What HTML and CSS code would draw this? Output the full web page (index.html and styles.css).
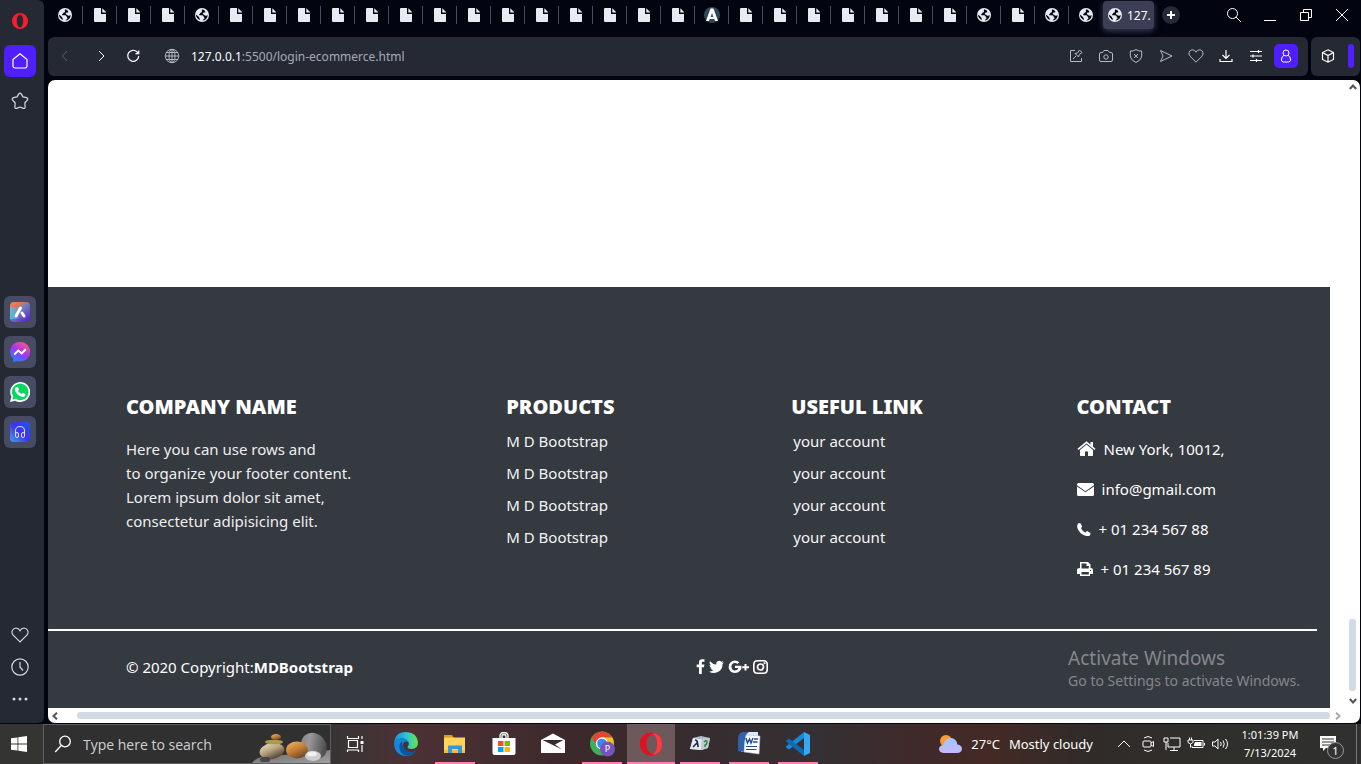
FILE: index.html
```html
<!DOCTYPE html>
<html lang="en">
<head>
<meta charset="utf-8">
<title>127.0.0.1:5500/login-ecommerce.html</title>
<link rel="stylesheet" href="styles.css">
</head>
<body>
<svg class="defs" aria-hidden="true">
  <symbol id="doc" viewBox="0 0 16 16"><path fill="#e8ecf2" d="M3 1h6v6h5v7.200q0 .8-.8.8H3.200Q2 15 2 14V2q0-1 1-1zM10.300 1.300 14 5v.6h-3.700z"/></symbol>
  <symbol id="globe" viewBox="0 0 16 16"><circle cx="8" cy="8" r="7" fill="#e8ecf2"/><path fill="#02040f" d="M8.500 2.200q-1.500 1.300-.4 2.300-.1 1-1.600 1.200-.3 1.200-1.500 1.500l.5 1.100 2.800-.1q1.600.7 1.500 2 1 .3.700 1.300L8.300 13.500Q13.500 13.200 13.700 8l-1.500.8Q10.500 9 10.200 7.700L8.800 7.200l.3-1.400 2.400-.6-.8-1.700zM1.800 7.600l2.400 1.700 1.100 1.500.9 2.200Q2.500 12 1.800 7.600z"/></symbol>
  <symbol id="heart" viewBox="0 0 16 16"><path fill="none" stroke="currentColor" stroke-width="1" d="M8 14.200 1.900 8.100Q.3 6 1.200 4 2.200 1.800 4.500 1.800 6.900 1.900 8 4.200 9.100 1.900 11.500 1.800q2.300 0 3.300 2.200.9 2-.7 4.100z"/></symbol>
</svg>

<div class="browser">
  <nav class="sidebar" aria-label="Browser sidebar">
    <div class="side-top">
      <button class="side-btn menu" aria-label="Opera menu"><svg viewBox="0 0 16 16" width="16" height="16"><path fill="#fa1e2d" fill-rule="evenodd" d="M8 0a8 8 0 1 0 0 16A8 8 0 1 0 8 0zM8 1.600c2 0 3.200 3 3.200 6.400S10 14.400 8 14.400 4.800 11.400 4.800 8 6 1.600 8 1.600z"/></svg></button>
      <button class="side-btn home" aria-label="Home"><svg viewBox="0 0 16 16" width="16" height="16"><path fill="none" stroke="#fff" stroke-width="1.200" d="M1 6.500 8 .7l7 5.800v6.300q0 2.200-2.200 2.200H3.200Q1 15 1 12.800z"/></svg></button>
      <button class="side-btn" aria-label="Favourites"><svg viewBox="0 0 18 18" width="18" height="18"><path fill="none" stroke="#d5d9e2" stroke-width="1.200" stroke-linejoin="round" d="M7.700 1.900Q9 .6 10.300 1.900l1.600 3 3.800.8q1.500.9.800 2.200l-2.700 3.100.4 4q-.2 1.800-1.900 1.400L9 15l-3.300 1.400Q4 16.800 3.800 15l.4-4L1.500 7.900q-.7-1.300.8-2.200l3.800-.8z"/></svg></button>
    </div>
    <div class="side-apps">
      <button class="side-btn app" aria-label="Aria"><svg viewBox="0 0 20 20" width="20" height="20"><defs><linearGradient id="aria" x1="0" y1="0" x2=".8" y2="1"><stop offset="0" stop-color="#e78f62"/><stop offset=".25" stop-color="#e47747"/><stop offset=".5" stop-color="#6f80bd"/><stop offset="1" stop-color="#5a27cf"/></linearGradient><linearGradient id="ariab"><stop offset="0" stop-color="#4cc4e4"/><stop offset=".5" stop-color="#4cc4e4" stop-opacity="0"/></linearGradient></defs><rect width="20" height="20" rx="4" fill="url(#aria)"/><rect y="5" width="20" height="12" fill="url(#ariab)"/><path stroke="#fff" stroke-width="3" stroke-linecap="round" d="M6 14 10.500 6M12 11l2 3"/></svg></button>
      <button class="side-btn app" aria-label="Messenger"><svg viewBox="0 0 20 20" width="20" height="20"><defs><linearGradient id="msg" x1=".2" y1="1" x2=".8" y2="0"><stop offset="0" stop-color="#168cff"/><stop offset=".5" stop-color="#a034fa"/><stop offset="1" stop-color="#ff5b75"/></linearGradient></defs><path fill="url(#msg)" d="M10 0a10 9.700 0 1 1-3 18.900L3.500 20 3.300 16.700A9.600 9.600 0 0 1 10 0z"/><path fill="none" stroke="#fff" stroke-width="2" d="m4.300 12.500 3.900-4 3.600 2.800 4-4"/></svg></button>
      <button class="side-btn app" aria-label="WhatsApp"><svg viewBox="0 0 20 20" width="20" height="20"><path fill="#fff" d="M0 20 1.400 14.800A10 10 0 1 1 5.200 18.700z"/><path fill="#08d860" d="m2.400 17.600.9-3.100A8.300 8.300 0 1 1 5.600 16.800z"/><path fill="#fff" d="M6.500 5h1.300l1.200 2.600-1 1.400q1.200 2.200 3.600 3l1.200-1.300 2.600 1.300q.2 2.800-2.600 3-3-.2-5.700-3Q4.600 9 5 6.500q.5-1.300 1.500-1.500z"/></svg></button>
      <button class="side-btn app" aria-label="Player"><svg viewBox="0 0 20 20" width="20" height="20"><defs><linearGradient id="ply" x1="0" y1="1" x2="1" y2="0"><stop offset="0" stop-color="#41a6f2"/><stop offset=".5" stop-color="#4031ee"/><stop offset="1" stop-color="#175ee0"/></linearGradient></defs><rect width="20" height="20" rx="4" fill="url(#ply)"/><path fill="none" stroke="#dfe2ff" d="M5.500 13V9q0-4.500 4.500-4.500T14.500 9v4"/><rect x="5.500" y="10.500" width="3" height="5" rx="1.500" fill="none" stroke="#dfe2ff"/><rect x="11.500" y="10.500" width="3" height="5" rx="1.500" fill="none" stroke="#dfe2ff"/></svg></button>
    </div>
    <div class="side-bottom">
      <button class="side-btn" aria-label="Pinboards"><svg width="18" height="18"><use href="#heart"/></svg></button>
      <button class="side-btn" aria-label="History"><svg viewBox="0 0 18 18" width="18" height="18" fill="none" stroke="#d5d9e2" stroke-width="1.200"><circle cx="9" cy="9" r="8.200"/><path d="M9 4v5l3 3.500"/></svg></button>
      <button class="side-btn" aria-label="More"><svg viewBox="0 0 18 18" width="18" height="18" fill="#d5d9e2"><circle cx="3" cy="9" r="1.500"/><circle cx="9" cy="9" r="1.500"/><circle cx="15" cy="9" r="1.500"/></svg></button>
    </div>
  </nav>

  <div class="window">
    <div class="tabstrip">
      <div class="tabs">
        <button class="tab" aria-label="Tab"><svg><use href="#globe"/></svg></button>
        <button class="tab" aria-label="Tab"><svg><use href="#doc"/></svg></button>
        <button class="tab" aria-label="Tab"><svg><use href="#doc"/></svg></button>
        <button class="tab" aria-label="Tab"><svg><use href="#doc"/></svg></button>
        <button class="tab" aria-label="Tab"><svg><use href="#globe"/></svg></button>
        <button class="tab" aria-label="Tab"><svg><use href="#doc"/></svg></button>
        <button class="tab" aria-label="Tab"><svg><use href="#doc"/></svg></button>
        <button class="tab" aria-label="Tab"><svg><use href="#doc"/></svg></button>
        <button class="tab" aria-label="Tab"><svg><use href="#doc"/></svg></button>
        <button class="tab" aria-label="Tab"><svg><use href="#doc"/></svg></button>
        <button class="tab" aria-label="Tab"><svg><use href="#doc"/></svg></button>
        <button class="tab" aria-label="Tab"><svg><use href="#doc"/></svg></button>
        <button class="tab" aria-label="Tab"><svg><use href="#doc"/></svg></button>
        <button class="tab" aria-label="Tab"><svg><use href="#doc"/></svg></button>
        <button class="tab" aria-label="Tab"><svg><use href="#doc"/></svg></button>
        <button class="tab" aria-label="Tab"><svg><use href="#doc"/></svg></button>
        <button class="tab" aria-label="Tab"><svg><use href="#doc"/></svg></button>
        <button class="tab" aria-label="Tab"><svg><use href="#doc"/></svg></button>
        <button class="tab" aria-label="Tab"><svg><use href="#doc"/></svg></button>
        <button class="tab" aria-label="Tab"><svg viewBox="0 0 16 16"><circle cx="8" cy="8" r="8" fill="#30475a"/><path fill="#fff" fill-rule="evenodd" d="M6.500 1.500h3L14 14h-2.800l-1-2H5.800l-1 2H2zM8 6l-1.300 4h2.600z"/></svg></button>
        <button class="tab" aria-label="Tab"><svg><use href="#doc"/></svg></button>
        <button class="tab" aria-label="Tab"><svg><use href="#doc"/></svg></button>
        <button class="tab" aria-label="Tab"><svg><use href="#doc"/></svg></button>
        <button class="tab" aria-label="Tab"><svg><use href="#doc"/></svg></button>
        <button class="tab" aria-label="Tab"><svg><use href="#doc"/></svg></button>
        <button class="tab" aria-label="Tab"><svg><use href="#doc"/></svg></button>
        <button class="tab" aria-label="Tab"><svg><use href="#doc"/></svg></button>
        <button class="tab" aria-label="Tab"><svg><use href="#globe"/></svg></button>
        <button class="tab" aria-label="Tab"><svg><use href="#doc"/></svg></button>
        <button class="tab" aria-label="Tab"><svg><use href="#globe"/></svg></button>
        <button class="tab last" aria-label="Tab"><svg><use href="#globe"/></svg></button>
        <button class="tab active"><svg><use href="#globe"/></svg><span>127.</span></button>
        <button class="new-tab" aria-label="New tab"><svg viewBox="0 0 18 18" width="18" height="18"><circle cx="9" cy="9" r="9" fill="#262a36"/><path stroke="#fff" stroke-width="2" d="M9 5v8M5 9h8"/></svg></button>
      </div>
      <div class="window-controls">
        <button aria-label="Search tabs"><svg viewBox="0 0 16 16"><circle cx="6.500" cy="6.500" r="5"/><path d="m10 10 5 5"/></svg></button>
        <button aria-label="Minimise"><svg viewBox="0 0 16 16"><path d="M2 13.500h12"/></svg></button>
        <button aria-label="Restore"><svg viewBox="0 0 16 16"><path d="M2.500 5.500h8v8h-8zM5.500 5.500v-3h8v8h-3"/></svg></button>
        <button aria-label="Close"><svg viewBox="0 0 16 16"><path d="m2 2 12 12M14 2 2 14"/></svg></button>
      </div>
    </div>

    <div class="toolbar">
      <div class="address-bar">
        <div class="nav-buttons">
          <button class="dim" aria-label="Back"><svg viewBox="0 0 16 16"><path d="M9 3 4.500 8 9 13"/></svg></button>
          <button aria-label="Forward"><svg viewBox="0 0 16 16"><path d="m7 3 5 5-5 5"/></svg></button>
          <button aria-label="Reload"><svg viewBox="0 0 16 16"><path stroke-width="1.200" d="M12.700 7.900A5.500 5.500 0 1 1 11.200 4l1.300 1.400M12.800 2.500v3.200H9.500"/></svg></button>
        </div>
        <svg class="site-icon" viewBox="0 0 16 16"><circle cx="8" cy="8" r="6.700"/><ellipse cx="8" cy="8" rx="3" ry="6.700"/><path d="M8 1v14M1.500 8h13M2.500 4.500h11M2.500 11.500h11"/></svg>
        <a class="url" href="#"><b>127.0.0.1</b>:5500/login-ecommerce.html</a>
        <div class="actions">
          <button class="soft" aria-label="Edit page"><svg viewBox="0 0 16 16"><path d="M7 2.500H2.500v11h11V10M5 11l3-3M7 5.500 10.500 9l.7-2.300 2.800-2.200L11.500 2 9.500 5z"/></svg></button>
          <button class="soft" aria-label="Snapshot"><svg viewBox="0 0 16 16"><path d="M4.500 4.500 6 2.500h4l1.500 2H13q1.500 0 1.500 1.500v6q0 1.500-1.500 1.500H3q-1.500 0-1.500-1.500V6Q1.500 4.500 3 4.500z"/><circle cx="8" cy="9" r="2.200"/></svg></button>
          <button class="soft" aria-label="Ad blocker"><svg viewBox="0 0 16 16"><path d="M8 1.500q2.800 2 5.700 1.500v5Q13.700 12 8 14.500 2.300 12 2.300 8V3Q5.200 3.500 8 1.500zM6 6l4 4M10 6l-4 4"/></svg></button>
          <button class="soft" aria-label="Send"><svg viewBox="0 0 16 16"><path d="m2.500 2.500 11.500 5.500-11.500 5.500L5 8z"/></svg></button>
          <button class="soft" aria-label="Add to pinboard"><svg><use href="#heart"/></svg></button>
          <button aria-label="Downloads"><svg viewBox="0 0 16 16"><path stroke-width="1.200" d="M8 2v8M4.500 7 8 10.500 11.500 7M2 11v2.500h12V11"/></svg></button>
          <button aria-label="Easy setup"><svg viewBox="0 0 16 16"><path stroke-width="1.200" d="M2 3.500h12M2 8h12M2 12.500h12M10.500 2v3M5 6.500v3M8.500 11v3"/></svg></button>
          <button class="profile" aria-label="Profile"><svg viewBox="0 0 16 16"><circle cx="8" cy="5" r="3"/><path d="M6 7.300Q3.500 9 3.500 11v1q0 2 2 2h5q2 0 2-2v-1q0-2-2.500-3.700"/></svg></button>
        </div>
      </div>
      <div class="extensions">
        <button aria-label="Extensions"><svg viewBox="0 0 16 16"><path stroke-width="1.200" d="m8 1.800 5.500 2.700v7L8 14.200l-5.500-2.700v-7zM2.500 4.500 8 7.500l5.500-3M8 7.500v6.700"/></svg></button>
        <span class="panel-handle"></span>
      </div>
    </div>

    <main class="page">
      <div class="page-view">
        <footer class="footer">
          <div class="columns">
            <section class="company">
              <h2>COMPANY NAME</h2>
              <p>Here you can use rows and<br>to organize your footer content.<br>Lorem ipsum dolor sit amet,<br>consectetur adipisicing elit.</p>
            </section>
            <section>
              <h2>PRODUCTS</h2>
              <ul class="links">
                <li><a href="#">M D Bootstrap</a></li>
                <li><a href="#">M D Bootstrap</a></li>
                <li><a href="#">M D Bootstrap</a></li>
                <li><a href="#">M D Bootstrap</a></li>
              </ul>
            </section>
            <section>
              <h2>USEFUL LINK</h2>
              <ul class="links inset">
                <li><a href="#">your account</a></li>
                <li><a href="#">your account</a></li>
                <li><a href="#">your account</a></li>
                <li><a href="#">your account</a></li>
              </ul>
            </section>
            <section>
              <h2>CONTACT</h2>
              <ul class="contact">
                <li><svg viewBox="0 0 19 16" width="19" height="16"><path d="M9.500 3.500 16 9v5.300q0 .7-.7.700H11v-4.500H8V15H3.700Q3 15 3 14.300V9z"/><path d="m1 8.300 8.500-7 8.500 7" fill="none" stroke="#fff" stroke-width="1.600"/><path d="M13.500 1H16v5l-2.500-2z"/></svg>New York, 10012,</li>
                <li><svg viewBox="0 0 17 16" width="17" height="16"><path d="M1.500 2h14q1.500 0 1.500 1.500v.7l-8.500 6L0 4.200v-.7Q0 2 1.500 2zM0 5.500l8.500 5.800L17 5.500v8q0 1.500-1.500 1.500h-14Q0 15 0 13.500z"/></svg>info@gmail.com</li>
                <li><svg viewBox="0 0 14 16" width="14" height="16"><path d="M1 2.500 3.200 2 5.300 5.500 4 7.300q1.500 3 4.200 4.200L10 10l3.500 2-.5 2.500q-2 1-4.500.3Q2 12.500.2 6.500 0 4 1 2.500z"/></svg>+ 01 234 567 88</li>
                <li><svg viewBox="0 0 16 16" width="16" height="16"><path fill-rule="evenodd" d="M3 1h8l2.500 2.500V7q2.500 0 2.500 2v4h-3v2H3v-2H0V9q0-2 3-2zM4.500 2.500v5h7.300V5H9.500V2.500zM4.500 11v2.500h7.300V11zM13 9v1h1V9z"/></svg>+ 01 234 567 89</li>
              </ul>
            </section>
          </div>
          <hr>
          <div class="legal">
            <p>© 2020 Copyright:<a href="#">MDBootstrap</a></p>
            <div class="social">
              <a href="#" aria-label="Facebook"><svg viewBox="0 0 9 16" width="9" height="16"><path d="M8.500.2v2.600H7q-1.200 0-1.200 1v1.700h2.600L8 8.200H5.800V15H3V8.200H.7V5.500H3V3.400Q3 .2 6.200.2z"/></svg></a>
              <a href="#" aria-label="Twitter"><svg viewBox="0 0 15 16" width="15" height="16"><path d="M15 3.500 13.500 5q.2 4.500-3 7Q5.500 15.500 0 12.700q2.500 0 4.300-1.400-2.200-.3-2.800-2h1.300Q.5 8.300.5 6l1.400.4Q-.2 4.500 1 2.300q2.400 2.900 6.300 3.200Q7 3.200 8.500 2.300q2.100-1.200 3.800.4l1.900-.7-1.200 1.700z"/></svg></a>
              <a href="#" aria-label="Google Plus"><svg viewBox="0 0 21 16" width="21" height="16"><path d="M7 6.700h6.500q.4 3-1.400 5-2 2.300-5.200 2.300-6-.4-6.300-6Q1 2 7 1.500q2.600 0 4.300 1.700L9.500 5Q8.500 4.100 7 4.100 3.500 4.400 3.400 7.800 3.600 11.300 7 11.500q2.900-.1 3.400-2.500H7zM16.500 5h2v2.200H21v2h-2.500v2.300h-2V9.200h-2.300v-2h2.300z"/></svg></a>
              <a href="#" aria-label="Instagram"><svg viewBox="0 0 15 16" width="15" height="16"><path fill-rule="evenodd" d="M4.500 1h6Q15 1 15 5.500v5q0 4.500-4.500 4.500h-6Q0 15 0 10.500v-5Q0 1 4.500 1zM4.600 2.600Q1.600 2.600 1.600 5.600v4.800q0 3 3 3h5.800q3 0 3-3V5.600q0-3-3-3z"/><circle cx="7.500" cy="8" r="3" fill="none" stroke="#fff" stroke-width="1.700"/><circle cx="11.500" cy="4.300" r="1"/></svg></a>
            </div>
          </div>
        </footer>
      </div>
      <div class="vscroll" aria-hidden="true">
        <svg viewBox="0 0 8 8" width="8" height="8"><path d="M.8 6 4 2.500 7.200 6"/></svg>
        <span class="thumb"></span>
        <svg viewBox="0 0 8 8" width="8" height="8"><path d="M.8 2 4 5.500 7.200 2"/></svg>
      </div>
      <div class="hscroll" aria-hidden="true">
        <svg viewBox="0 0 8 8" width="8" height="8"><path d="M6 .8 2.500 4 6 7.200"/></svg>
        <span class="thumb"></span>
        <svg class="faded" viewBox="0 0 8 8" width="8" height="8"><path d="M2 .8 5.500 4 2 7.200"/></svg>
      </div>
      <div class="activate"><strong>Activate Windows</strong><span>Go to Settings to activate Windows.</span></div>
    </main>
  </div>
</div>

<div class="taskbar">
  <button class="start" aria-label="Start"><svg viewBox="0 0 16 16" width="16" height="16"><path fill="#fff" d="M0 2.300 6.500 1.400v6.100H0zM7.300 1.200 16 0v7.500H7.300zM0 8.400h6.500v6.200L0 13.700zM7.300 8.400H16V16l-8.700-1.200z"/></svg></button>
  <div class="search">
    <svg viewBox="0 0 18 18" width="18" height="18"><circle cx="11" cy="6.500" r="5.300" fill="none" stroke="#fff" stroke-width="1.300"/><path stroke="#fff" stroke-width="1.300" d="m7.200 10.500-6 6.500"/></svg>
    <input type="text" placeholder="Type here to search" aria-label="Type here to search">
    <svg class="stones" viewBox="0 0 80 38" width="80" height="38">
      <defs>
        <linearGradient id="sand" x2="0.400" y2="1"><stop offset="0" stop-color="#e9dfbd"/><stop offset=".5" stop-color="#bca984"/><stop offset="1" stop-color="#5c4e3b"/></linearGradient>
        <linearGradient id="amber" x2="0.600" y2="1"><stop offset="0" stop-color="#f2b85f"/><stop offset=".6" stop-color="#bd7833"/><stop offset="1" stop-color="#6b4929"/></linearGradient>
        <linearGradient id="slate" x2="0.700" y2="1"><stop offset="0" stop-color="#7c7d7d"/><stop offset=".4" stop-color="#999"/><stop offset="1" stop-color="#444"/></linearGradient>
        <linearGradient id="ground" y2="1"><stop offset="0" stop-color="#666"/><stop offset="1" stop-color="#a0a0a0"/></linearGradient>
      </defs>
      <path fill="url(#ground)" d="M2 38Q7 31 19 31L60 28l20-3v13z"/>
      <ellipse cx="64" cy="21" rx="12" ry="14" fill="url(#slate)" transform="rotate(-40 64 21)"/>
      <ellipse cx="22" cy="26" rx="12.500" ry="8" fill="url(#sand)" transform="rotate(-10 22 26)"/>
      <ellipse cx="24" cy="17" rx="9" ry="2.300" fill="#aa9c4e"/>
      <ellipse cx="26" cy="12" rx="5" ry="3" fill="url(#amber)"/>
      <ellipse cx="47" cy="25" rx="11" ry="8.500" fill="url(#amber)"/>
      <ellipse cx="63" cy="31" rx="8" ry="5" fill="#cdcdcd"/><ellipse cx="62" cy="29" rx="5" ry="2.500" fill="#efefef"/>
      <rect x="10" y="32" width="10" height="5" rx="2.500" fill="#464646"/>
    </svg>
  </div>
  <div class="pinned">
    <button aria-label="Task view"><svg viewBox="0 0 24 24" width="24" height="24" fill="none" stroke="#fff" stroke-width="1.200"><path d="M5.500 8.500h9v7h-9zM4.500 4v2.500h11V4M4.500 20v-2h11v2M19 4v3M19 13v7"/><path fill="#fff" stroke="none" d="M17.500 9h3v3h-3z"/></svg></button>
    <button aria-label="Edge"><svg viewBox="0 0 24 24" width="24" height="24"><defs><linearGradient id="e1"><stop offset="0" stop-color="#128ed6"/><stop offset=".5" stop-color="#2bc2dd"/><stop offset="1" stop-color="#67e54a"/></linearGradient></defs><path fill="url(#e1)" d="M0 11Q1 0 12 0q11 0 12 10.500Q24 17 17.500 17q-4 0-4-2.200Q16 12 14 9.200 10.500 5 5.500 7 1.500 8 0 11z"/><path fill="#1687d8" d="M0 11Q2 5.500 8 6.300q5 .4 6.500 4Q10 8 9 12.500q-.5 7.500 7 8.300 3.500 0 5.500-1.800Q18 24 12 24 1 23.500 0 12z"/><path fill="#0b56a0" d="M8 9q-5 5-1 11 3 4.500 8 3.600 4-1 7-5-3.500 2-7 1Q8 17 8 9z"/></svg></button>
    <button class="open" aria-label="File Explorer"><svg viewBox="0 0 24 24" width="24" height="24"><path fill="#e39b0b" d="M1 3h8l2 3H1z"/><path fill="#ffd35c" d="M1 5.500h21V21H1z"/><path fill="#f8bd38" d="M1 18h21v3H1z"/><path fill="#3797dc" d="M5 13.500h14V21h-4v-4H9v4H5z"/></svg></button>
    <button aria-label="Microsoft Store"><svg viewBox="0 0 24 24" width="24" height="24"><path fill="none" stroke="#fff" stroke-width="1.300" d="M8 7V4q0-3.500 4-3.500T16 4v3M10 7V4q0-1.500 2-1.500T14 4v3"/><path fill="#fff" d="M.5 6h23v15q0 2-2 2h-19q-2 0-2-2z"/><path fill="#f25022" d="M6 9h5.500v5H6z"/><path fill="#7fba00" d="M12.500 9H18v5h-5.500z"/><path fill="#00a4ef" d="M6 15h5.500v5H6z"/><path fill="#ffb900" d="M12.500 15H18v5h-5.500z"/></svg></button>
    <button aria-label="Mail"><svg viewBox="0 0 24 24" width="24" height="24"><path fill="#fff" d="m0 8 12-6.500L24 8v13H0z"/><path fill="#3a292b" d="M1.500 8H22.500L14 12.500l7 5z"/></svg></button>
    <button class="open" aria-label="Chrome"><svg viewBox="0 0 26 26" width="26" height="26"><circle cx="13" cy="12.500" r="12" fill="#3daf57"/><path fill="#e94335" d="M2.700 6.500A12 12 0 0 1 23.400 6.500H13L8 14.500z"/><path fill="#fbc116" d="M13 6.500h10.400Q26 12 24 17l-10 7 4.500-9z"/><circle cx="13" cy="12.500" r="5.500" fill="#4285f4" stroke="#fff" stroke-width="1.300"/><circle cx="18.500" cy="18" r="7.500" fill="#7654bd"/><text x="18.500" y="21" text-anchor="middle" class="avatar">P</text></svg></button>
    <button class="open current" aria-label="Opera"><svg viewBox="0 0 24 24" width="24" height="24"><path fill="#e01222" fill-rule="evenodd" d="M12 .5a11.200 11.500 0 1 0 0 23 11.200 11.500 0 1 0 0-23zM13 2.500c3 0 5 4 5 9.500s-2 9.500-5 9.500-5.500-4-5.500-9.500 2.500-9.500 5.500-9.500z"/><path fill="#ff3b42" d="M15.500 1Q23.200 3.800 23.200 12T15.500 23L13 21.500q5 0 5-9.500T13 2.500z"/></svg></button>
    <button class="open" aria-label="Lambda cubes"><svg viewBox="0 0 24 24" width="24" height="24"><path fill="#aebdc9" d="m5 6 8-2 9 2-2 10-6 2-12-1z"/><path fill="#e3e9ef" d="m5 6 9 1.500L13 18 2 17z"/><path fill="#c2cdc9" d="m14 7.500 8-1.500-2 10-7 2z"/><path fill="none" stroke="#1e2847" stroke-width="1.600" d="M7 8q2 0 2.200 2l1 5M9 11l-4 4"/><path fill="none" stroke="#268655" stroke-width="1.500" d="M16 10q3-2.500 3 0t-2 3v2"/></svg></button>
    <button class="open" aria-label="Word"><svg viewBox="0 0 24 24" width="24" height="24"><path fill="#dce9f8" d="M6 0h15v20H4z"/><path fill="#2f62a9" d="M1 7q0-7 6-7h5Q7 2 7 20l-6-1z"/><path fill="#fff" stroke="#afc4de" stroke-width=".6" d="m9 3 14 1-1 18-15-2z"/><path fill="none" stroke="#214a98" stroke-width="1.500" d="m9 6 1.500 5L12.500 7l1.500 4L16 6M17 7h4M16 10h4.500"/><path fill="none" stroke="#214a98" stroke-width="1.200" d="M9 14.500h11M9 17.500h10.500"/></svg></button>
    <button class="open" aria-label="Visual Studio Code"><svg viewBox="0 0 24 24" width="24" height="24"><path fill="#138bd8" d="M18 0v6L3 17.500 0 15.500v-1z"/><path fill="#0c6bb1" d="m0 8.500 3-2L18 18v6L0 9.500z"/><path fill="#35a8f2" d="m18 0 6 3v18l-6 3z"/></svg></button>
  </div>
  <div class="tray">
    <button class="weather"><svg viewBox="0 0 24 20" width="24" height="20"><defs><linearGradient id="cl" x2="0" y2="1"><stop offset="0" stop-color="#9fc6ff"/><stop offset="1" stop-color="#c6b8f9"/></linearGradient></defs><circle cx="8" cy="7" r="6" fill="#f89b37"/><path fill="url(#cl)" d="M5.500 19Q1 18.500 1 15q.3-3.500 4.300-4Q7 4 13 4q5.500.5 6.400 6.500Q24 11 24 15q-.5 4-5 4z"/></svg><span>27°C</span><span>Mostly cloudy</span></button>
    <div class="tray-icons">
      <button aria-label="Show hidden icons"><svg viewBox="0 0 18 18"><path d="m3 12 6-6 6 6"/></svg></button>
      <button aria-label="Meet now"><svg viewBox="0 0 18 18"><path d="M5 3q4-3 8 0M5 15q4 3 8 0M5 6h6q1 0 1 1v4q0 1-1 1H5q-1 0-1-1V7q0-1 1-1zM12 8l2.500-1.500v5L12 10"/></svg></button>
      <button aria-label="Network"><svg viewBox="0 0 18 18"><path d="M7 3h10v9H5V8M1 3h4v4H1zM3 7v8M7 15.500h8M11 12v3.500"/></svg></button>
      <button aria-label="Battery"><svg viewBox="0 0 18 18"><path d="M7 5.500h9v7H5V11M1 5h5v2.500q-2.500 3-5 0zM2.500 2.500V5M4.500 2.500V5M17.500 8v2.500M3.500 9v3.500"/><path class="solid" d="M8 7h6.500v4H7V9.500z"/></svg></button>
      <button aria-label="Volume"><svg viewBox="0 0 18 18"><path d="M1.500 7H4l3-3v10l-3-3H1.500zM9.500 7q1.500 2 0 4M12 5.500q2.500 3.500 0 7M14.500 4q4 5 0 10"/></svg></button>
    </div>
    <div class="clock"><span>1:01:39 PM</span><span>7/13/2024</span></div>
    <button class="notices" aria-label="Notifications"><svg viewBox="0 0 18 18" width="18" height="18"><path fill="#fff" fill-rule="evenodd" d="M1 1h16v12H7l-3 3v-3H1zM3 3.500v1h12v-1zM3 6.500v1h12v-1zM3 9.500v1h8v-1z"/></svg><span class="badge">1</span></button>
  </div>
</div>
</body>
</html>
```
FILE: styles.css
```css
* { box-sizing: border-box; }
body {
  margin: 0;
  height: 100vh;
  display: flex;
  flex-direction: column;
  overflow: hidden;
  background: #02040f;
  color: #fff;
  font-family: "Noto Sans", "Open Sans", sans-serif;
}
button {
  display: flex;
  align-items: center;
  justify-content: center;
  padding: 0;
  border: 0;
  background: none;
  color: inherit;
  font: inherit;
}
svg { flex: none; display: block; }
h2, p, ul { margin: 0; padding: 0; }
ul { list-style: none; }
a { color: inherit; text-decoration: none; }
.defs { position: absolute; width: 0; height: 0; }

.browser { flex: 1; min-height: 0; display: flex; gap: 4px; padding-bottom: 1px; }

/* Sidebar */
.sidebar {
  flex: none;
  width: 44px;
  display: flex;
  flex-direction: column;
  justify-content: space-between;
  padding: 5px 0 8px 4px;
  background: #252934;
  border-radius: 0 6px 6px 0;
  color: #d5d9e2;
}
.side-top, .side-apps { display: flex; flex-direction: column; gap: 8px; }
.side-apps { padding-top: 8px; }
.side-btn { width: 32px; height: 32px; border-radius: 6px; }
.home { background: #4f1fff; }
.app { background: #484c62; }

/* Tabs */
.window { flex: 1; min-width: 0; display: flex; flex-direction: column; }
.tabstrip { height: 37px; display: flex; justify-content: space-between; }
.tabs { display: flex; padding-top: 1px; }
.tab { position: relative; width: 34px; height: 28px; }
.tab + .tab { padding-left: 2px; }
.tab svg { width: 16px; height: 16px; }
.tab::after {
  content: "";
  position: absolute;
  right: -1px;
  top: 5px;
  width: 1px;
  height: 18px;
  background: #484b62;
}
.tab.last::after, .tab.active::after { display: none; }
.tab.active {
  width: 51px;
  margin-left: 1px;
  gap: 4px;
  padding-left: 4px;
  justify-content: flex-start;
  overflow: hidden;
  border-radius: 4px;
  background: #3b3e55;
  box-shadow: 0 2px 6px #3b3e55;
  font-size: 12px;
}
.new-tab { width: 18px; height: 28px; margin-left: 8px; }
.window-controls { display: flex; gap: 4px; padding-right: 3px; }
.window-controls button { width: 32px; height: 30px; }
.window-controls svg, .nav-buttons svg, .actions svg, .extensions svg, .site-icon {
  width: 16px;
  height: 16px;
  fill: none;
  stroke: currentColor;
  stroke-width: 1;
}

/* Toolbar */
.toolbar { height: 39px; display: flex; gap: 3px; margin-bottom: 4px; padding-right: 1px; }
.address-bar {
  flex: 1;
  display: flex;
  align-items: center;
  padding: 0 10px 1px 8px;
  border-radius: 6px;
  background: #252934;
}
.nav-buttons { display: flex; gap: 14px; }
.nav-buttons button { width: 20px; height: 24px; }
.nav-buttons .dim { color: #5c606c; }
.site-icon { margin: 0 11px 0 20px; color: #b4b8c0; }
.url { flex: 1; color: #a4abb8; font-size: 12px; }
.url b { color: #fff; font-weight: 400; }
.actions { display: flex; gap: 6px; }
.actions button { width: 24px; height: 24px; border-radius: 5px; }
.actions .soft { color: #b6bac2; }
.actions .profile { background: #4f1fff; }
.extensions {
  width: 49px;
  display: flex;
  align-items: center;
  justify-content: space-between;
  padding: 0 6px 1px 9px;
  border-radius: 6px;
  background: #252934;
}
.panel-handle { width: 6px; height: 24px; border-radius: 3px; background: #4f1fff; }

/* Page viewport */
.page {
  position: relative;
  flex: 1;
  min-height: 0;
  display: grid;
  grid-template: minmax(0, 1fr) 15px / minmax(0, 1fr) 15px;
  margin-right: 1px;
  overflow: hidden;
  border-radius: 7px;
  background: #fff;
}
.page-view { display: flex; flex-direction: column; justify-content: flex-end; padding-right: 15px; }
.vscroll, .hscroll { display: flex; align-items: center; }
.vscroll { flex-direction: column; padding: 3px 0; }
.hscroll { padding: 0 3px 0 3px; gap: 4px; }
.vscroll svg, .hscroll svg { fill: none; stroke: #555; stroke-width: 2; }
.hscroll .faded { stroke: #aaa; }
.vscroll .thumb { width: 7px; height: 72px; margin: auto 0 6px; border-radius: 3px; background: #d1dbe4; }
.hscroll .thumb { flex: 1; height: 7px; margin-left: 14px; border-radius: 3px; background: #d1dbe4; }

/* Footer */
.footer { background: #353940; font-size: 15px; line-height: 24px; }
.columns { display: grid; grid-template-columns: 12fr 9fr 9fr 8fr; padding: 108px 0 48px 78px; }
.footer h2 { font-size: 20px; font-weight: 900; line-height: 24px; }
.company p { margin-top: 18px; color: #eee; }
.links { margin-top: 6px; line-height: 32px; color: #f4f4f4; }
.inset { padding-left: 2px; }
.contact { display: flex; flex-direction: column; gap: 16px; margin-top: 18px; }
.contact li { display: flex; align-items: center; gap: 8px; }
.contact svg, .social svg { fill: #fff; }
.footer hr { height: 2px; margin: 0 13px 0 0; border: 0; background: #fff; }
.legal { display: grid; grid-template-columns: 9fr 10fr; align-items: center; padding: 24px 0 29px 78px; }
.legal a { font-weight: 700; }
.social { display: flex; gap: 4px; }
.activate {
  position: absolute;
  right: 60px;
  bottom: 32px;
  display: flex;
  flex-direction: column;
  color: #85878b;
  font-size: 14px;
  line-height: 20px;
}
.activate strong { font-size: 19px; font-weight: 400; line-height: 25px; }

/* Taskbar */
.taskbar {
  flex: none;
  height: 40px;
  display: flex;
  background: linear-gradient(90deg, #343533 0, #393434 25%, #4c3135 30%, #3c292b 42%, #372c2f 50%, #343033 60%, #40292a 68%, #432a25 73%, #302b29 80%, #2f2f2b 90%, #303030 100%);
}
.start { width: 43px; padding-right: 5px; }
.search {
  width: 288px;
  display: flex;
  align-items: center;
  padding-left: 10px;
  border: 1px solid #5d5d5d;
  background: #303030;
}
.search input {
  flex: 1;
  min-width: 0;
  padding: 0 0 0 11px;
  border: 0;
  outline: 0;
  background: none;
  color: #fff;
  font: 14px "Open Sans", "Noto Sans", sans-serif;
}
.search input::placeholder { color: #d0d0d0; opacity: 1; }
.pinned { display: flex; gap: 1px; }
.pinned button { position: relative; width: 48px; }
.pinned button:first-child { margin-right: 2px; }
.open::after {
  content: "";
  position: absolute;
  left: 4px;
  right: 4px;
  bottom: 0;
  height: 2px;
  background: #ff81b4;
}
.current { background: #6d595c; }
.current::after { left: 0; right: 0; }
.avatar { fill: #fff; font-size: 9px; }
.tray { margin-left: auto; display: flex; align-items: center; font-size: 13px; }
.weather { gap: 9px; margin-right: 22px; }
.tray-icons { display: flex; gap: 6px; }
.tray-icons svg { width: 18px; height: 18px; fill: none; stroke: #fff; stroke-width: 1; }
.tray-icons .solid { fill: #fff; stroke: none; }
.clock {
  width: 82px;
  display: flex;
  flex-direction: column;
  align-items: center;
  font-size: 11px;
  line-height: 18px;
}
.notices { position: relative; width: 46px; height: 40px; padding-right: 12px; border-right: 1px solid #777; margin-right: 4px; }
.badge {
  position: absolute;
  left: 16px;
  top: 18px;
  width: 17px;
  height: 17px;
  border: 1px solid #999;
  border-radius: 9px;
  background: #333;
  font-size: 11px;
  line-height: 15px;
}
```
